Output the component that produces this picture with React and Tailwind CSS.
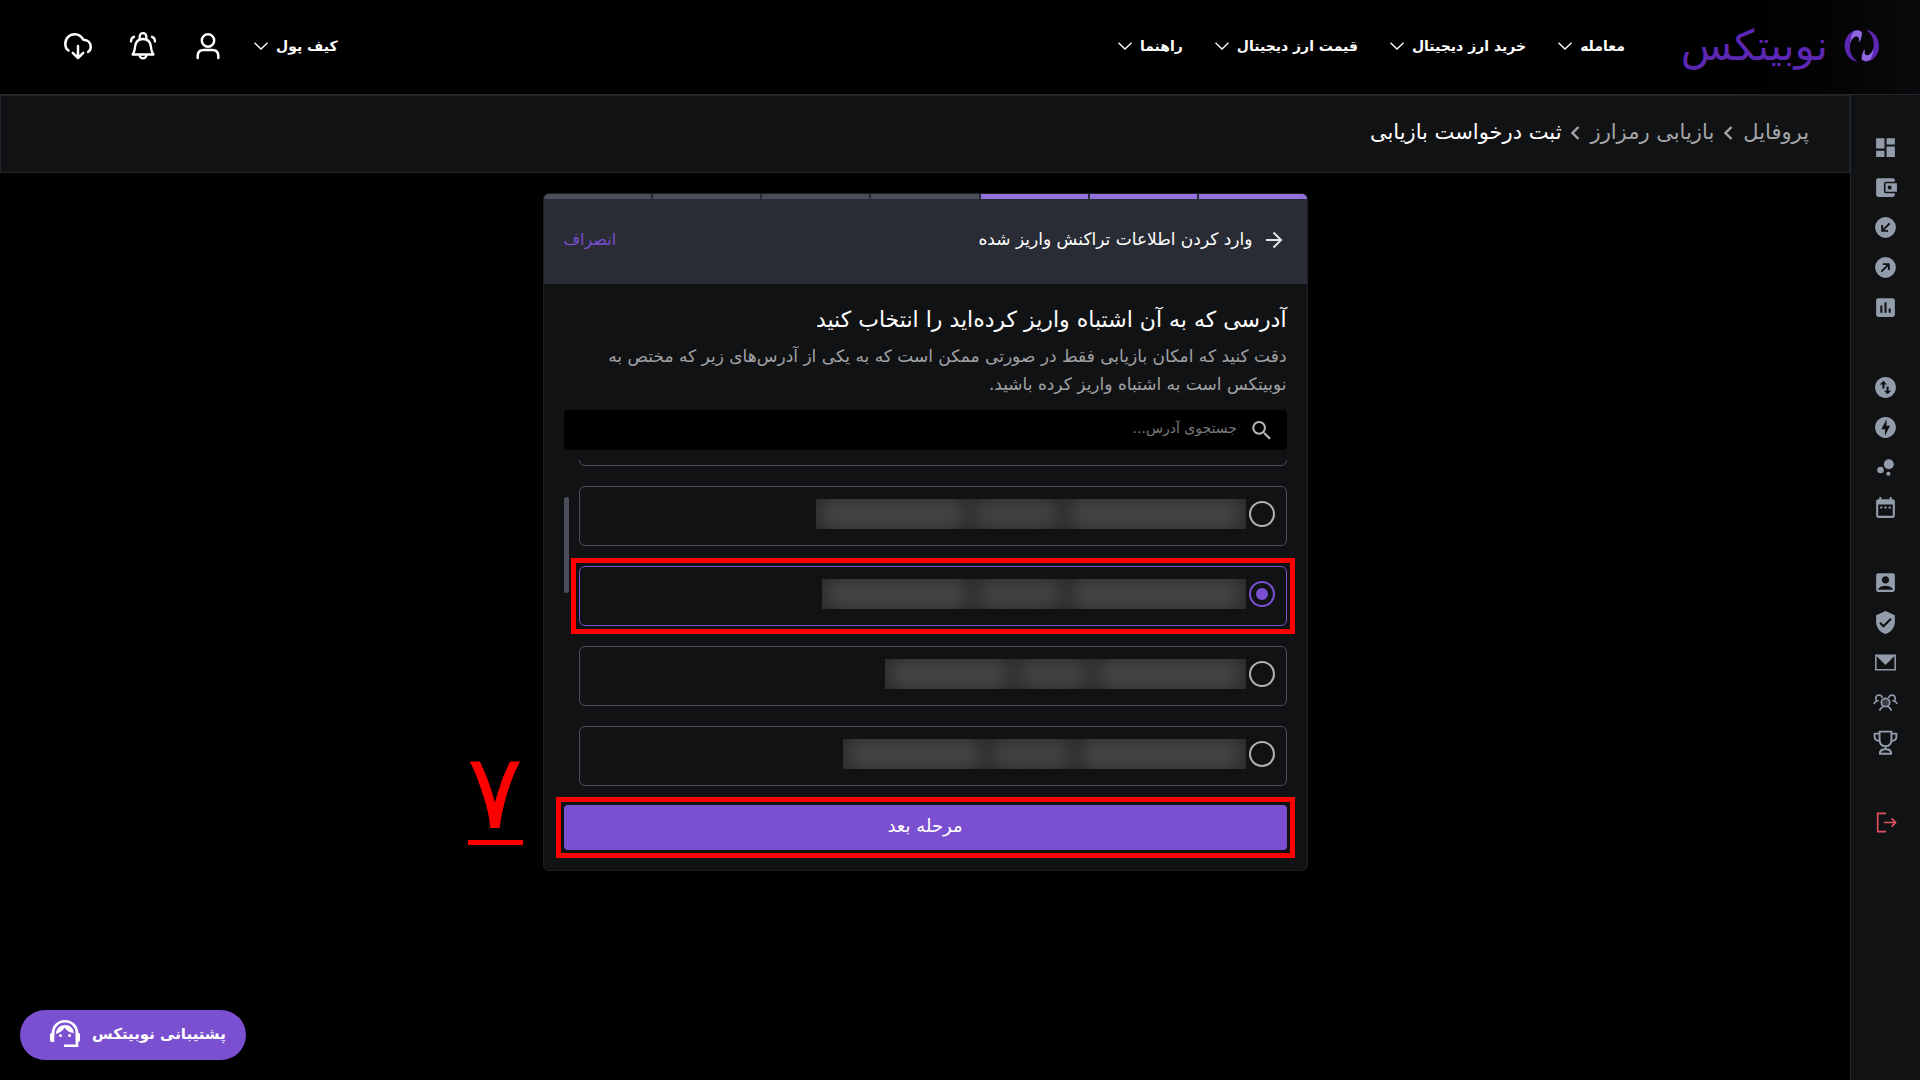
import React from "react";
import { useState } from "react";
import {
  MdDashboard,
  MdPoll,
  MdSwapVerticalCircle,
  MdOfflineBolt,
  MdBubbleChart,
  MdDateRange,
  MdAccountBox,
  MdVerifiedUser,
  MdSearch,
} from "react-icons/md";

const navLinks = ["معامله", "خرید ارز دیجیتال", "قیمت ارز دیجیتال", "راهنما"];

const addresses = [
  { id: 0, label: "آدرس ۱", mask: "w-[400px]" },
  { id: 1, label: "آدرس ۲", mask: "w-[430px]" },
  { id: 2, label: "آدرس ۳", mask: "w-[424px]" },
  { id: 3, label: "آدرس ۴", mask: "w-[361px]" },
  { id: 4, label: "آدرس ۵", mask: "w-[403px]" },
];

const Chevron = () => (
  <svg width="14" height="8" viewBox="0 0 14 8" fill="none" stroke="currentColor" strokeWidth="1.3">
    <path d="M0.5 0.7L7 7L13.5 0.7" />
  </svg>
);

const Crumb = () => (
  <svg width="9" height="14" viewBox="0 0 9 14" fill="none" stroke="#a3a5a8" strokeWidth="2.4">
    <path d="M7.5 1L1.5 7L7.5 13" />
  </svg>
);

const LogoMark = () => (
  <svg width="36" height="34" viewBox="555 60 108 102">
    <path d="M600 63C575 62 557 84 557 109C557 136 573 156 596 158C578 146 571 128 573 109C575 92 584 80 597 80Z" fill="#5b27b3" />
    <path d="M585 67C600 62 610 66 609 74C608 86 605 95 599 100C602 86 598 80 588 83C580 86 576 95 574 103C574 88 578 75 585 67Z" fill="#9166e2" />
    <g transform="rotate(180 608.5 110.5)">
      <path d="M600 63C575 62 557 84 557 109C557 136 573 156 596 158C578 146 571 128 573 109C575 92 584 80 597 80Z" fill="#5b27b3" />
      <path d="M585 67C600 62 610 66 609 74C608 86 605 95 599 100C602 86 598 80 588 83C580 86 576 95 574 103C574 88 578 75 585 67Z" fill="#9166e2" />
    </g>
  </svg>
);

const UserIcon = () => (
  <svg width="28" height="28" viewBox="0 0 28 28" fill="none" stroke="currentColor" strokeWidth="2.5" strokeLinecap="round">
    <circle cx="14" cy="8.5" r="6.2" />
    <path d="M3.7 26V24c0-4 2.3-6 6-6h8.600c3.700 0 6 2 6 6v2" />
  </svg>
);

const BellIcon = () => (
  <svg width="28" height="28" viewBox="0 0 28 28" fill="none" stroke="currentColor" strokeWidth="2.300" strokeLinecap="round" strokeLinejoin="round">
    <path d="M3.500 22.500H24.500C22.500 20.500 22.300 18 22 15C21.500 10 19 7 14 7C9 7 6.500 10 6 15C5.700 18 5.500 20.500 3.500 22.500Z" />
    <path d="M10.700 7V4.500a3.300 3.300 0 0 1 6.600 0V7" />
    <path d="M10.700 24a3.400 3 0 0 0 6.600 0" />
    <path d="M2 9.500C2 7 3 5.500 5 4.800M26 9.500C26 7 25 5.500 23 4.800" />
  </svg>
);

const CloudIcon = () => (
  <svg width="28" height="28" viewBox="0 0 28 28" fill="none" stroke="currentColor" strokeWidth="2.500" strokeLinecap="round" strokeLinejoin="round">
    <path d="M4.500 18.500C2 17 1.300 14.500 1.300 12C1.300 6 5.500 2.200 11 2.200C14.800 2.200 17.200 4 19.500 7.800C24 8 26.700 11 26.700 15C26.700 17.500 26 19 24 20" />
    <path d="M14 14V26M8.800 20.800L14 26L19.200 20.800" />
  </svg>
);

const WalletIcon = () => (
  <svg width="25" height="25" viewBox="0 0 24 24" fill="currentColor">
    <path d="M21 6.500V5a2 2 0 0 0-2-2H5a2 2 0 0 0-2 2v14a2 2 0 0 0 2 2h14a2 2 0 0 0 2-2v-1.500h-8.500a2 2 0 0 1-2-2v-7a2 2 0 0 1 2-2z" />
    <path fillRule="evenodd" d="M12 8h11v8H12zM17.700 10.300h-3.400v3.400h3.400v-3.400z" />
  </svg>
);

const DepositIcon = () => (
  <svg width="25" height="25" viewBox="0 0 24 24" fill="none">
    <circle cx="12" cy="12" r="10" fill="currentColor" />
    <path d="M16 8L8.800 15.200M8.800 9.500V15.200H14.500" stroke="#111214" strokeWidth="1.800" />
  </svg>
);

const WithdrawIcon = () => (
  <svg width="25" height="25" viewBox="0 0 24 24" fill="none">
    <circle cx="12" cy="12" r="10" fill="currentColor" />
    <path d="M8 16L15.200 8.800M9.500 8.800H15.200V14.500" stroke="#111214" strokeWidth="1.800" />
  </svg>
);

const MailIcon = () => (
  <svg width="25" height="25" viewBox="0 0 24 24">
    <path d="M2.700 5.100H21.300V18.900H2.700Z" fill="none" stroke="currentColor" strokeWidth="1.500" />
    <path d="M2.600 5H21.400L12 14.500Z" fill="currentColor" />
  </svg>
);

const GroupIcon = () => (
  <svg width="25" height="25" viewBox="0 0 24 24" fill="none" stroke="currentColor" strokeWidth="1.600">
    <path d="M3.300 10A3.200 3.200 0 1 1 9 7.500M20.700 10A3.200 3.200 0 1 0 15 7.500" />
    <path d="M1 13.500C1.500 11.500 3 10.300 5.500 10.300M23 13.500C22.500 11.500 21 10.300 18.500 10.300" />
    <circle cx="12" cy="12" r="4" fill="#3a3f48" />
    <path d="M6.300 20C7 17.500 8.500 16.500 10 15.800M17.700 20C17 17.500 15.500 16.500 14 15.800" />
  </svg>
);

const TrophyIcon = () => (
  <svg width="25" height="25" viewBox="0 0 24 24" fill="none" stroke="currentColor" strokeWidth="1.800" strokeLinejoin="round">
    <path d="M6.300 1.500H17.700V9C17.700 13 15.500 15.500 12 15.500S6.300 13 6.300 9Z" />
    <path d="M6.300 3.500H1.500V6.500C1.500 9 3.500 10.500 6.800 10.500M17.700 3.500H22.500V6.500C22.500 9 20.500 10.500 17.200 10.500" />
    <path d="M12 15.500V18.500M6.500 22.800C6.500 20 8.500 18.500 12 18.500S17.500 20 17.500 22.800Z" />
  </svg>
);

const LogoutIcon = () => (
  <svg width="25" height="25" viewBox="0 0 24 24" fill="none" stroke="#e0525e" strokeWidth="1.600">
    <path d="M12.500 3.200H4.500V20.800H12.500M10.500 12H21.500M17.800 8L21.700 12L17.800 16" />
  </svg>
);

const SupportIcon = () => (
  <svg width="30" height="28" viewBox="0 0 30 28" fill="none">
    <path d="M3 16V13.500C3 6.500 8 1.300 15 1.300S27 6.500 27 13.500V25.700H14" stroke="currentColor" strokeWidth="2.600" />
    <path d="M4.300 12.500V22H2A2 2 0 0 1 0 20V15A2.500 2.500 0 0 1 3 12.500ZM25.700 12.500V22H28A2 2 0 0 0 30 20V15A2.500 2.500 0 0 0 27 12.500Z" fill="currentColor" />
    <path d="M6 14C6 9 9.500 5 15 5C20 5 23.500 8 24 13C20 12.500 16.500 11 14.500 7.500C13 10.500 9.500 13 6 14Z" fill="currentColor" />
    <circle cx="10.500" cy="15.500" r="1.500" fill="currentColor" />
    <circle cx="19.500" cy="15.500" r="1.500" fill="currentColor" />
  </svg>
);

const sideGroups = [
  {
    space: "mt-10",
    items: [
      { name: "داشبورد", icon: <MdDashboard size={25} /> },
      { name: "کیف پول", icon: <WalletIcon /> },
      { name: "واریز", icon: <DepositIcon /> },
      { name: "برداشت", icon: <WithdrawIcon /> },
      { name: "گزارش", icon: <MdPoll size={25} /> },
    ],
  },
  {
    space: "mt-[55px]",
    items: [
      { name: "معامله", icon: <MdSwapVerticalCircle size={25} /> },
      { name: "تبدیل", icon: <MdOfflineBolt size={25} /> },
      { name: "استیکینگ", icon: <MdBubbleChart size={25} /> },
      { name: "تاریخچه", icon: <MdDateRange size={25} /> },
    ],
  },
  {
    space: "mt-[50px]",
    items: [
      { name: "پروفایل", icon: <MdAccountBox size={25} /> },
      { name: "امنیت", icon: <MdVerifiedUser size={25} /> },
      { name: "پیام‌ها", icon: <MailIcon /> },
      { name: "دعوت از دوستان", icon: <GroupIcon /> },
      { name: "جوایز", icon: <TrophyIcon /> },
    ],
  },
  {
    space: "mt-[55px]",
    items: [{ name: "خروج", icon: <LogoutIcon /> }],
  },
];

const Header = () => (
  <header className="flex h-[95px] items-center justify-between border-b border-[#20272c] bg-linear-to-l from-[#0b0b0d] via-black via-15% to-black ps-10 pe-16 pb-0.5">
    <div className="flex items-center gap-14">
      <a href="#" className="flex items-center gap-4">
        <LogoMark />
        <span className="text-[42px] leading-10 text-[#5b27b3]">نوبیتکس</span>
      </a>
      <nav className="flex items-center gap-8">
        {navLinks.map((item) => (
          <a key={item} href="#" className="flex items-center gap-2 text-[14px] font-bold">
            {item}
            <Chevron />
          </a>
        ))}
      </nav>
    </div>
    <div className="flex items-center gap-8">
      <a href="#" className="flex items-center gap-2 text-[14px] font-bold">
        کیف پول
        <Chevron />
      </a>
      <div className="flex items-center gap-[37px]">
        <button aria-label="حساب کاربری"><UserIcon /></button>
        <button aria-label="اعلان‌ها"><BellIcon /></button>
        <button aria-label="دانلود"><CloudIcon /></button>
      </div>
    </div>
  </header>
);

const Sidebar = () => (
  <aside className="flex w-[70px] shrink-0 flex-col items-center border-e border-[#20272c] bg-[#111214] text-[#929cab]">
    {sideGroups.map((group, i) => (
      <div key={i} className={`${group.space} flex flex-col gap-[15px]`}>
        {group.items.map((item) => (
          <a key={item.name} href="#" aria-label={item.name}>{item.icon}</a>
        ))}
      </div>
    ))}
  </aside>
);

const RecoveryCard = () => {
  const [selected, setSelected] = useState(2);
  const [search, setSearch] = useState("");

  return (
    <div className="relative mx-auto w-full max-w-[765px]">
      <section className="rounded-md border border-[#1e2025] bg-[#111214]">
        <div className="rounded-t-md bg-[#2a2c35]">
          <div className="flex gap-[2px] overflow-hidden rounded-t-md">
            {Array.from({ length: 7 }, (_, i) => (
              <div key={i} className={i < 3 ? "h-[5px] flex-1 bg-[#9370db]" : "h-[5px] flex-1 bg-[#4b4e5a]"} />
            ))}
          </div>
          <div className="flex h-[85px] items-center justify-between ps-6 pe-5 pb-1">
            <div className="flex items-center gap-3">
              <button aria-label="بازگشت">
                <svg width="18" height="18" viewBox="0 0 18 18" fill="none" stroke="#e2e3e5" strokeWidth="2">
                  <path d="M1 9H15.500M8.500 1.500L16 9L8.500 16.500" />
                </svg>
              </button>
              <h1 className="text-[17px]">وارد کردن اطلاعات تراکنش واریز شده</h1>
            </div>
            <a href="#" className="text-[16px] text-[#7a4fd0]">انصراف</a>
          </div>
        </div>

        <div className="px-5 pt-5 pb-5">
          <h2 className="text-[22px] leading-8">آدرسی که به آن اشتباه واریز کرده‌اید را انتخاب کنید</h2>
          <p className="mt-1.5 text-[17px] leading-7 text-[#a0a2a5]">
            دقت کنید که امکان بازیابی فقط در صورتی ممکن است که به یکی از آدرس‌های زیر که مختص به نوبیتکس است به اشتباه واریز کرده باشید.
          </p>
          <label className="mt-3 flex h-10 items-center gap-3 rounded bg-black px-3">
            <MdSearch size={27} color="#b4b6b9" />
            <input
              onChange={(e) => setSearch(e.target.value)}
              value={search}
              type="text"
              aria-label="جستجوی آدرس"
              placeholder="جستجوی آدرس..."
              className="w-full bg-transparent pb-1 text-[14px] outline-none placeholder:text-[#77797c]"
            />
          </label>

          <div className="mt-[10px] flex h-[326px] justify-between gap-[10px]">
            <div className="flex h-full flex-1 flex-col justify-end gap-5 overflow-y-clip">
              {addresses.map((item) => (
                <label
                  key={item.id}
                  className={
                    selected === item.id
                      ? "relative flex h-[60px] shrink-0 items-center gap-[3px] rounded-md border border-[#7a4fd0] px-[11px] pb-1"
                      : "flex h-[60px] shrink-0 items-center gap-[3px] rounded-md border border-[#4b4e5a] px-[11px] pb-1"
                  }
                >
                  <input
                    type="radio"
                    name="address"
                    aria-label={item.label}
                    checked={selected === item.id}
                    onChange={() => setSelected(item.id)}
                    className="grid size-[26px] shrink-0 appearance-none place-items-center rounded-full border-2 border-[#b0b1b3] checked:border-[#7a4fd0] before:size-[12px] before:rounded-full checked:before:bg-[#7a4fd0]"
                  />
                  <div className={`${item.mask} flex h-[30px] justify-around overflow-hidden bg-[#2b2c2e]`}>
                    <span className="h-full w-2/5 rounded-full bg-[#434446] blur-[8px]" />
                    <span className="h-full w-1/5 rounded-full bg-[#3f4240] blur-[8px]" />
                    <span className="h-full w-1/3 rounded-full bg-[#434446] blur-[8px]" />
                  </div>
                  {selected === item.id && (
                    <span className="pointer-events-none absolute -inset-[9px] border-5 border-[#ff0000]" />
                  )}
                </label>
              ))}
            </div>
            <div className="mt-[37px] h-24 w-[5px] rounded-full bg-[#4b4e5a]" />
          </div>

          <div className="relative mt-[19px]">
            <button className="h-[45px] w-full rounded bg-[#7a4fd0] pb-1 text-[18px]">مرحله بعد</button>
            <span className="pointer-events-none absolute -inset-2 border-5 border-[#ff0000]" />
          </div>
        </div>
      </section>
      <span className="absolute right-full bottom-[26px] ms-5 flex h-[100px] w-[55px] items-end justify-center border-b-5 border-[#ff0000] text-[105px] leading-[96px] text-[#ff0000]">۷</span>
    </div>
  );
};

const App = () => {
  return (
    <div dir="rtl" lang="fa" className="flex min-h-screen flex-col bg-black font-['DejaVu_Sans',sans-serif] text-white">
      <Header />
      <div className="flex flex-1">
        <Sidebar />
        <main className="min-w-0 flex-1">
          <div className="flex h-[78px] items-center gap-2.5 border border-[#20232a] bg-[#111214] px-10 pb-0.5 text-[21px] text-[#a3a5a8]">
            <a href="#">پروفایل</a>
            <Crumb />
            <a href="#">بازیابی رمزارز</a>
            <Crumb />
            <span className="text-white">ثبت درخواست بازیابی</span>
          </div>
          <div className="px-5 pt-5 pb-5">
            <RecoveryCard />
          </div>
        </main>
      </div>
      <button className="fixed bottom-5 left-5 flex h-[50px] items-center gap-3 rounded-full bg-[#7a4fd0] ps-5 pe-[30px] pb-0.5 text-[15px] font-bold">
        پشتیبانی نوبیتکس
        <SupportIcon />
      </button>
    </div>
  );
};

export default App;
